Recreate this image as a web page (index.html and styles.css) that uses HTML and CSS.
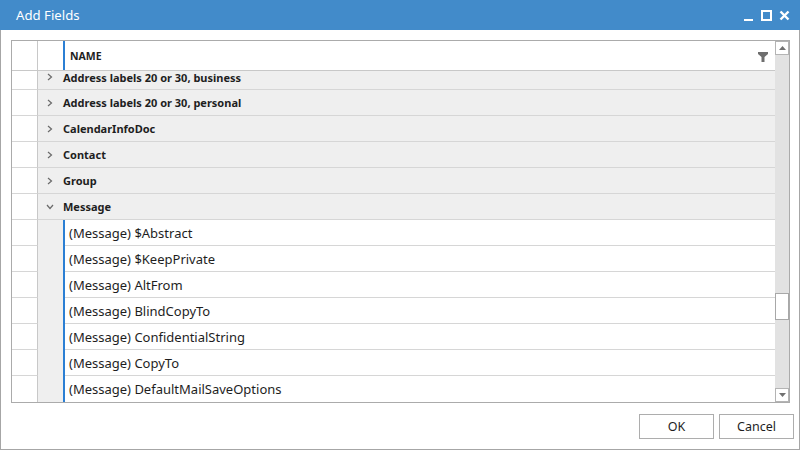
FILE: index.html
```html
<!DOCTYPE html>
<html>
<head>
<meta charset="utf-8">
<title>Add Fields</title>
<link rel="stylesheet" href="styles.css">
</head>
<body>
<div class="window">
  <div class="titlebar">
    <span class="title">Add Fields</span>
    <div class="controls">
      <svg class="ctl" width="12" height="12" viewBox="0 0 12 12"><rect x="1" y="9" width="9" height="2" fill="#fff"/></svg>
      <svg class="ctl" width="12" height="12" viewBox="0 0 12 12"><rect x="1" y="1" width="9" height="9" fill="none" stroke="#fff" stroke-width="2"/></svg>
      <svg class="ctl" width="12" height="12" viewBox="0 0 12 12"><path d="M1.5 1.5 L9.5 9.5 M9.5 1.5 L1.5 9.5" stroke="#fff" stroke-width="2.4"/></svg>
    </div>
  </div>
  <div class="content">
    <div class="grid">
      <div class="main">
        <div class="header">
          <div class="c1"></div>
          <div class="c2"></div>
          <div class="hname">
            <span>NAME</span>
            <svg class="filter" width="11" height="10" viewBox="0 0 11 10"><path d="M0 0 H10 V2 L6.5 5 V10 H3.5 V5 L0 2 Z" fill="#6e6e6e"/></svg>
          </div>
        </div>
        <div class="rows">
          <div class="row group first"><div class="c1"></div><div class="gcell"><span class="chev"><svg width="6" height="8" viewBox="0 0 6 8"><path d="M1 1 L4.5 4 L1 7" fill="none" stroke="#6a6a6a" stroke-width="1.2"/></svg></span><span>Address labels 20 or 30, business</span></div></div>
          <div class="row group"><div class="c1"></div><div class="gcell"><span class="chev"><svg width="6" height="8" viewBox="0 0 6 8"><path d="M1 1 L4.5 4 L1 7" fill="none" stroke="#6a6a6a" stroke-width="1.2"/></svg></span><span>Address labels 20 or 30, personal</span></div></div>
          <div class="row group"><div class="c1"></div><div class="gcell"><span class="chev"><svg width="6" height="8" viewBox="0 0 6 8"><path d="M1 1 L4.5 4 L1 7" fill="none" stroke="#6a6a6a" stroke-width="1.2"/></svg></span><span>CalendarInfoDoc</span></div></div>
          <div class="row group"><div class="c1"></div><div class="gcell"><span class="chev"><svg width="6" height="8" viewBox="0 0 6 8"><path d="M1 1 L4.5 4 L1 7" fill="none" stroke="#6a6a6a" stroke-width="1.2"/></svg></span><span>Contact</span></div></div>
          <div class="row group"><div class="c1"></div><div class="gcell"><span class="chev"><svg width="6" height="8" viewBox="0 0 6 8"><path d="M1 1 L4.5 4 L1 7" fill="none" stroke="#6a6a6a" stroke-width="1.2"/></svg></span><span>Group</span></div></div>
          <div class="row group"><div class="c1"></div><div class="gcell"><span class="chev"><svg width="8" height="6" viewBox="0 0 8 6"><path d="M1 1 L4 4.5 L7 1" fill="none" stroke="#6a6a6a" stroke-width="1.2"/></svg></span><span>Message</span></div></div>
          <div class="row child"><div class="c1"></div><div class="c2"></div><div class="ccell">(Message) $Abstract</div></div>
          <div class="row child"><div class="c1"></div><div class="c2"></div><div class="ccell">(Message) $KeepPrivate</div></div>
          <div class="row child"><div class="c1"></div><div class="c2"></div><div class="ccell">(Message) AltFrom</div></div>
          <div class="row child"><div class="c1"></div><div class="c2"></div><div class="ccell">(Message) BlindCopyTo</div></div>
          <div class="row child"><div class="c1"></div><div class="c2"></div><div class="ccell">(Message) ConfidentialString</div></div>
          <div class="row child"><div class="c1"></div><div class="c2"></div><div class="ccell">(Message) CopyTo</div></div>
          <div class="row child last"><div class="c1"></div><div class="c2"></div><div class="ccell">(Message) DefaultMailSaveOptions</div></div>
        </div>
      </div>
      <div class="scrollbar">
        <div class="sbtn"><svg width="7" height="4" viewBox="0 0 7 4"><path d="M0 4 L3.5 0 L7 4 Z" fill="#707070"/></svg></div>
        <div class="track">
          <div class="thumb"></div>
        </div>
        <div class="sbtn"><svg width="7" height="4" viewBox="0 0 7 4"><path d="M0 0 L3.5 4 L7 0 Z" fill="#707070"/></svg></div>
      </div>
    </div>
    <div class="footer">
      <button class="btn">OK</button>
      <button class="btn">Cancel</button>
    </div>
  </div>
</div>
</body>
</html>
```

FILE: styles.css
```css
* { box-sizing: border-box; }
html, body { margin: 0; padding: 0; background: #fff; }
body { font-family: "Noto Sans", "Open Sans", sans-serif; color: #1e1e1e; }

.window { width: 800px; height: 450px; display: flex; flex-direction: column; background: #fff; }

.titlebar {
  height: 30px; flex: none;
  background: #428bca;
  display: flex; align-items: center; justify-content: space-between;
  padding: 0 9px 0 16px;
}
.title { color: #fff; font-size: 13.2px; line-height: 30px; }
.controls { display: flex; gap: 6px; align-items: center; margin-top: 1px; }
.ctl { display: block; }

.content {
  flex: 1;
  border: 1px solid #a6a6a6; border-top: none;
  padding: 10px 0 0 10px;
  display: flex; flex-direction: column;
}

.grid {
  height: 363px; margin-right: 9px;
  border: 1px solid #ababab;
  display: flex;
}
.main { flex: 1; display: flex; flex-direction: column; min-width: 0; }

.header { height: 30px; flex: none; display: flex; border-bottom: 1px solid #c8c8c8; }
.c1 { width: 26px; flex: none; border-right: 1px solid #c8c8c8; background: #fff; }
.c2 { width: 27px; flex: none; }
.header .c2 { border-right: 2px solid #2b7fd4; }
.hname {
  flex: 1; display: flex; align-items: center; justify-content: space-between;
  padding: 0 6px 0 5px;
  font-size: 10.5px; font-weight: 700; color: #1e1e1e;
}
.filter { display: block; margin-top: 2px; }

.rows { flex: 1; overflow: hidden; display: flex; flex-direction: column; }
.row { height: 26px; flex: none; display: flex; }
.row.first { height: 19px; }
.row.first .gcell { padding-bottom: 6px; }
.row.last { flex: 1; height: auto; }
.row .c1 { border-bottom: 1px solid #d6d6d6; }
.row.last .c1, .row.last .ccell { border-bottom: none; }
.gcell {
  flex: 1; background: #efefef; border-bottom: 1px solid #d6d6d6;
  display: flex; align-items: center;
  padding-left: 8px;
  font-size: 11px; font-weight: 700; color: #1e1e1e;
}
.chev { width: 8px; flex: none; margin-right: 9px; display: flex; justify-content: center; align-items: center; }
.chev svg { display: block; }
.row.child .c2 { background: #efefef; border-right: 2px solid #2b7fd4; }
.ccell {
  flex: 1; border-bottom: 1px solid #d6d6d6;
  display: flex; align-items: center; padding-left: 4px;
  font-size: 13px; color: #1e1e1e;
}

.scrollbar { width: 14px; flex: none; display: flex; flex-direction: column; background: #e2e2e2; }
.sbtn {
  height: 14px; flex: none; background: #fff; border: 1px solid #b4b4b4;
  display: flex; align-items: center; justify-content: center;
}
.sbtn svg { display: block; }
.track { flex: 1; display: flex; flex-direction: column; padding-top: 238px; }
.thumb { height: 27px; background: #fff; border: 1px solid #a8a8a8; }

.footer { display: flex; justify-content: flex-end; gap: 5px; padding-right: 5px; margin-top: 11px; }
.btn {
  width: 75px; height: 25px; background: #fff; border: 1px solid #adadad; border-radius: 0;
  font-family: "Noto Sans", "Open Sans", sans-serif; font-size: 12.5px; color: #1e1e1e; padding: 0;
}
```
